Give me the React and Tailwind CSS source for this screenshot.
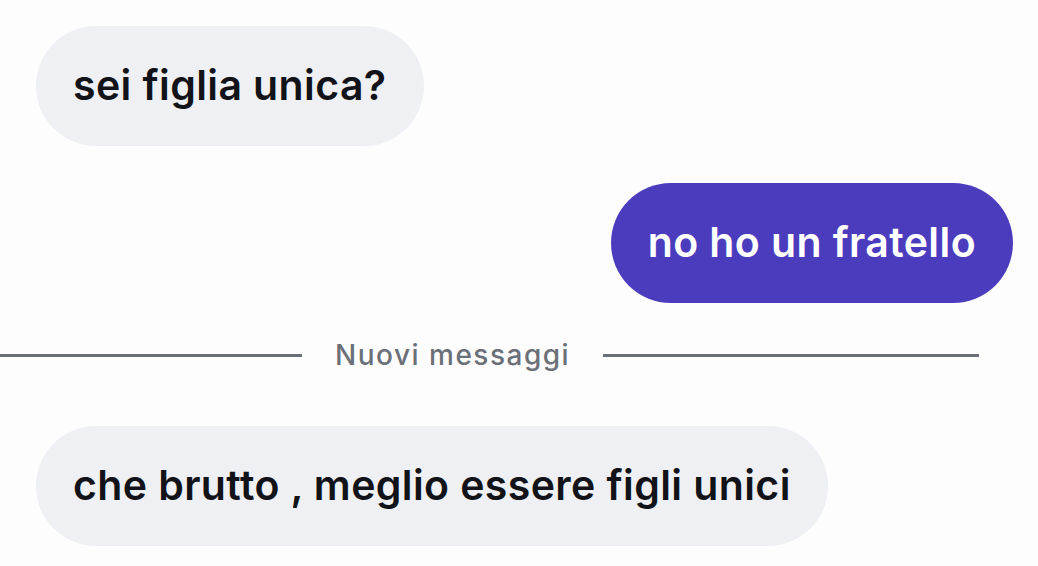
export default function App() {
  return (
    <div
      className="h-[566px] w-[1038px] overflow-hidden bg-[#fdfdfe] pt-[26px]"
      style={{ fontFamily: 'Inter, "Noto Sans", sans-serif' }}
    >
      <div className="flex flex-col">
        <div className="flex pl-[36px]">
          <div className="flex h-[120px] items-center rounded-full bg-[#eff0f3] px-[37px] text-[41px] font-semibold tracking-[0.4px] text-[#111318]">
            sei figlia unica?
          </div>
        </div>

        <div className="mt-[37px] flex justify-end pr-[25px]">
          <div className="flex h-[120px] items-center rounded-full bg-[#4b3cbe] px-[37px] text-[41px] font-semibold tracking-[0.4px] text-white">
            no ho un fratello
          </div>
        </div>

        <div className="mt-[27px] flex h-[50px] items-center">
          <div className="h-[3px] w-[302px] bg-[#6b7078]" />
          <span className="mx-[33px] text-[28px] font-medium tracking-[1.5px] text-[#6b7078]">Nuovi messaggi</span>
          <div className="h-[3px] w-[376px] bg-[#6b7078]" />
        </div>

        <div className="mt-[46px] flex pl-[36px]">
          <div className="flex h-[120px] items-center rounded-full bg-[#eff0f3] px-[37px] text-[41px] font-semibold tracking-[0.4px] text-[#111318]">
            che brutto , meglio essere figli unici
          </div>
        </div>
      </div>
    </div>
  );
}
